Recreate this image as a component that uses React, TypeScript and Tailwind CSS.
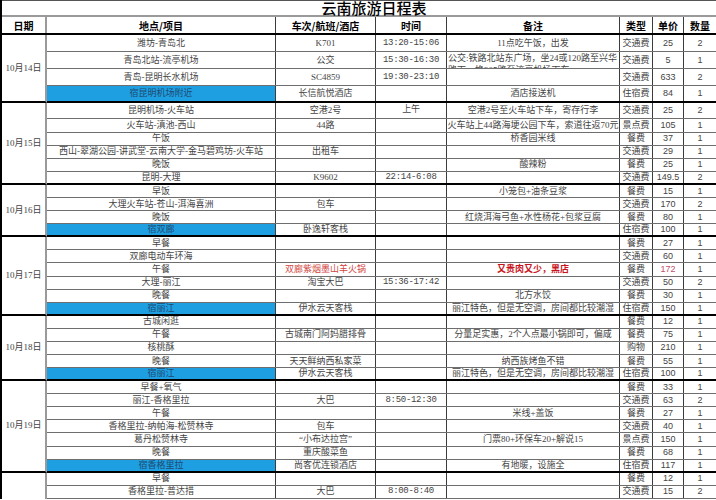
type Item = {
  p: string;
  c?: string;
  t?: string;
  n?: string;
  k: string;
  v: string;
  q: string;
  h?: string;
  blue?: boolean;
  red?: boolean;
  wrap?: boolean;
};

type Day = { date: string; rows: Item[]; open?: boolean };

const days: Day[] = [
  {
    date: '10月14日',
    rows: [
      { p: '潍坊-青岛北', c: 'K701', t: '13:20-15:06', n: '11点吃午饭，出发', k: '交通费', v: '25', q: '2', h: 'h-[17px]' },
      { p: '青岛北站-流亭机场', c: '公交', t: '15:30-16:30', n: '公交:铁路北站东广场，坐24或120路至兴华路下，换305路至流亭机场下车', k: '交通费', v: '5', q: '1', h: 'h-[17px]', wrap: true },
      { p: '青岛-昆明长水机场', c: 'SC4859', t: '19:30-23:10', k: '交通费', v: '633', q: '2', h: 'h-[17px]' },
      { p: '宿昆明机场附近', c: '长信航悦酒店', n: '酒店接送机', k: '住宿费', v: '84', q: '1', h: 'h-[17px]', blue: true },
    ],
  },
  {
    date: '10月15日',
    rows: [
      { p: '昆明机场-火车站', c: '空港2号', t: '上午', n: '空港2号至火车站下车，寄存行李', k: '交通费', v: '25', q: '2', h: 'h-[16px]' },
      { p: '火车站-滇池-西山', c: '44路', n: '火车站上44路海埂公园下车，索道往返70元', k: '景点费', v: '105', q: '1', h: 'h-[13.7px]' },
      { p: '午饭', n: '桥香园米线', k: '餐费', v: '37', q: '1' },
      { p: '西山-翠湖公园-讲武堂-云南大学-金马碧鸡坊-火车站', c: '出租车', k: '交通费', v: '29', q: '1' },
      { p: '晚饭', n: '酸辣粉', k: '餐费', v: '25', q: '1' },
      { p: '昆明-大理', c: 'K9602', t: '22:14-6:08', k: '交通费', v: '149.5', q: '2' },
    ],
  },
  {
    date: '10月16日',
    rows: [
      { p: '早饭', n: '小笼包+油条豆浆', k: '餐费', v: '15', q: '1' },
      { p: '大理火车站-苍山-洱海喜洲', c: '包车', k: '交通费', v: '170', q: '2' },
      { p: '晚饭', n: '红烧洱海弓鱼+水性杨花+包浆豆腐', k: '餐费', v: '80', q: '1' },
      { p: '宿双廊', c: '卧逸轩客栈', k: '住宿费', v: '100', q: '1', blue: true },
    ],
  },
  {
    date: '10月17日',
    rows: [
      { p: '早餐', k: '餐费', v: '27', q: '1' },
      { p: '双廊电动车环海', k: '交通费', v: '60', q: '1' },
      { p: '午餐', c: '双廊紫烟墨山羊火锅', n: '又贵肉又少，黑店', k: '餐费', v: '172', q: '1', red: true },
      { p: '大理-丽江', c: '淘宝大巴', t: '15:36-17:42', k: '交通费', v: '50', q: '2' },
      { p: '晚餐', n: '北方水饺', k: '餐费', v: '30', q: '1' },
      { p: '宿丽江', c: '伊水云天客栈', n: '丽江特色，但是无空调，房间都比较潮湿', k: '住宿费', v: '150', q: '1', blue: true },
    ],
  },
  {
    date: '10月18日',
    rows: [
      { p: '古城闲逛', k: '餐费', v: '12', q: '1' },
      { p: '午餐', c: '古城南门阿妈腊排骨', n: '分量足实惠，2个人点最小锅即可，偏咸', k: '餐费', v: '75', q: '1' },
      { p: '核桃酥', k: '购物', v: '210', q: '1' },
      { p: '晚餐', c: '天天鲜纳西私家菜', n: '纳西族烤鱼不错', k: '餐费', v: '55', q: '1' },
      { p: '宿丽江', c: '伊水云天客栈', n: '丽江特色，但是无空调，房间都比较潮湿', k: '住宿费', v: '100', q: '1', blue: true },
    ],
  },
  {
    date: '10月19日',
    rows: [
      { p: '早餐+氧气', k: '餐费', v: '33', q: '1' },
      { p: '丽江-香格里拉', c: '大巴', t: '8:50-12:30', k: '交通费', v: '63', q: '2' },
      { p: '午餐', n: '米线+盖饭', k: '餐费', v: '27', q: '1' },
      { p: '香格里拉-纳帕海-松赞林寺', c: '包车', k: '交通费', v: '40', q: '1' },
      { p: '葛丹松赞林寺', c: '“小布达拉宫”', n: '门票80+环保车20+解说15', k: '景点费', v: '150', q: '1' },
      { p: '晚餐', c: '重庆酸菜鱼', k: '餐费', v: '68', q: '1' },
      { p: '宿香格里拉', c: '尚客优连锁酒店', n: '有地暖，设施全', k: '住宿费', v: '117', q: '1', blue: true },
    ],
  },
  {
    date: '',
    open: true,
    rows: [
      { p: '早餐', k: '餐费', v: '12', q: '1' },
      { p: '香格里拉-普达措', c: '大巴', t: '8:00-8:40', k: '交通费', v: '15', q: '2' },
    ],
  },
];

const cols = 'grid grid-cols-[229px_100px_71px_173px_33px_31px_32px]';
const cell = 'flex items-center justify-center overflow-hidden whitespace-nowrap border-r border-r-[#3c3c3c]';

function Row({ r, last }: { r: Item; last: boolean }) {
  const bottom = last ? 'border-b-2 border-b-black' : 'border-b border-b-[#6e6e6e]';
  return (
    <div className={`${cols} ${r.h ?? 'h-[13.08px]'} ${bottom}`}>
      <div className={`${cell} ${r.blue ? 'bg-[#1e9fe2] text-[#1f4a70]' : ''}`}>{r.p}</div>
      <div className={`${cell} ${r.red ? 'text-[#d2463f]' : ''}`}>{r.c}</div>
      <div className={`${cell} font-['Liberation_Mono','Noto_Sans_CJK_SC',monospace] text-[9px] tracking-[-0.3px]`}>{r.t}</div>
      {r.wrap ? (
        <div className="overflow-hidden border-r border-r-[#3c3c3c] pl-[1px] text-left leading-[12px]">{r.n}</div>
      ) : (
        <div className={`${cell} ${r.red ? 'font-bold text-[#c8141c]' : ''}`}>{r.n}</div>
      )}
      <div className={cell}>{r.k}</div>
      <div className={`${cell} font-['Liberation_Sans','Noto_Sans_CJK_SC',sans-serif] ${r.red ? 'text-[#c0506e]' : ''}`}>{r.v}</div>
      <div className="flex items-center justify-center font-['Liberation_Sans',sans-serif]">{r.q}</div>
    </div>
  );
}

export default function App() {
  return (
    <div className="h-[500px] w-[716px] overflow-hidden bg-white">
      <div className="border-l-2 border-l-black font-['Liberation_Serif','Noto_Sans_CJK_SC',serif] text-[9px] leading-[11px] text-[#444]">
        {/* title */}
        <div className="flex h-[17px] items-center justify-center border-t border-t-[#555] border-b-2 border-b-[#9a9a9a] pl-[30px] font-['Noto_Sans_CJK_SC',sans-serif] text-[15px] leading-[14px] font-medium text-black">
          云南旅游日程表
        </div>

        {/* header */}
        <div className="flex h-[18px] border-b-2 border-b-black font-['Noto_Sans_CJK_SC',sans-serif] text-[10px] font-bold text-black">
          <div className="flex w-[45px] items-center justify-center border-r-2 border-r-[#9a9a9a]">日期</div>
          <div className={cols}>
            <div className={cell}>地点/项目</div>
            <div className={cell}>车次/航班/酒店</div>
            <div className={cell}>时间</div>
            <div className={cell}>备注</div>
            <div className={cell}>类型</div>
            <div className={cell}>单价</div>
            <div className="flex items-center justify-center">数量</div>
          </div>
        </div>

        {days.map((d, i) => (
          <div key={i} className="flex">
            <div
              className={`flex w-[45px] items-center justify-center border-r-2 border-r-[#9a9a9a] ${
                d.open ? '' : 'border-b-2 border-b-black'
              }`}
            >
              {d.date}
            </div>
            <div className="flex flex-col">
              {d.rows.map((r, j) => (
                <Row key={j} r={r} last={!d.open && j === d.rows.length - 1} />
              ))}
            </div>
          </div>
        ))}
      </div>
    </div>
  );
}
